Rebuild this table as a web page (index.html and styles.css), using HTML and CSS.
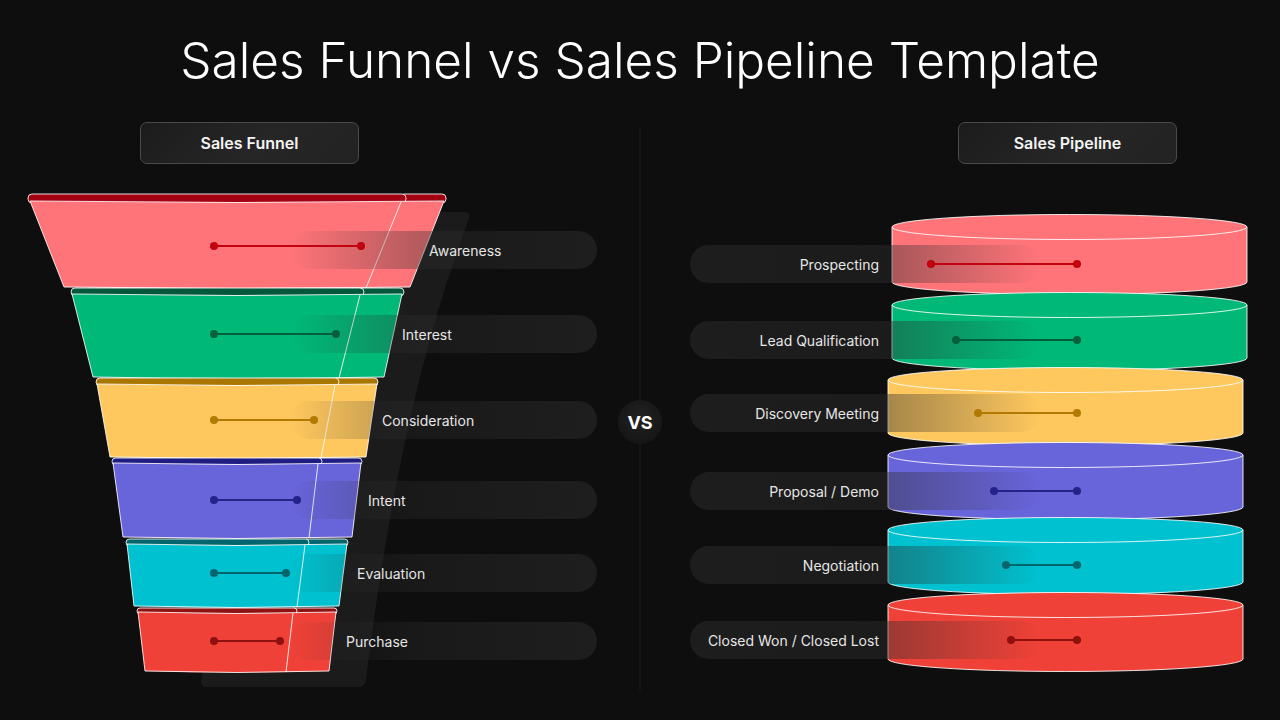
FILE: index.html
```html
<!DOCTYPE html>
<html lang="en">
<head>
<meta charset="utf-8">
<title>Sales Funnel vs Sales Pipeline Template</title>
<link rel="stylesheet" href="styles.css">
</head>
<body>
<main class="slide">
  <h1 class="title">Sales Funnel vs Sales Pipeline Template</h1>
  <div class="compare">
    <section class="panel funnel-panel">
      <div class="tag">Sales Funnel</div>
      <div class="diagram">
        <svg class="art" viewBox="0 164 640 536" width="640" height="536" aria-hidden="true">
          <path class="band" d="M380 212 L463 212 Q471 212 469 219 Q400 400 366 680 Q365 687 358 687 L207 687 Q200 687 201 680 Q250 420 380 212 Z"/>
          <!-- Awareness -->
          <g>
            <rect class="edge" x="400" y="194" width="46" height="9" rx="4" fill="#a30012"/>
            <rect class="edge" x="28" y="194" width="378" height="9" rx="4" fill="#a30012"/>
            <path class="edge" fill="#ff7479" d="M30 201 Q237 204 444 201 L410 287 Q237 290 64 287 Z"/>
            <path class="edge" fill="none" d="M401 202 L366 288"/>
          </g>
          <!-- Interest -->
          <g>
            <rect class="edge" x="358" y="288" width="46" height="8" rx="4" fill="#03573a"/>
            <rect class="edge" x="71" y="288" width="293" height="8" rx="4" fill="#03573a"/>
            <path class="edge" fill="#00b978" d="M72 294 Q237 297 402 294 L384 377 Q237 380 93 377 Z"/>
            <path class="edge" fill="none" d="M360 295 L339 378"/>
          </g>
          <!-- Consideration -->
          <g>
            <rect class="edge" x="333" y="378" width="45" height="8" rx="4" fill="#a97600"/>
            <rect class="edge" x="96" y="378" width="243" height="8" rx="4" fill="#a97600"/>
            <path class="edge" fill="#ffc85e" d="M97 384 Q237 387 377 384 L366 457 Q237 460 110 457 Z"/>
            <path class="edge" fill="none" d="M335 385 L321 458"/>
          </g>
          <!-- Intent -->
          <g>
            <rect class="edge" x="316" y="458" width="46" height="7" rx="3.5" fill="#1f1d82"/>
            <rect class="edge" x="112" y="458" width="210" height="7" rx="3.5" fill="#1f1d82"/>
            <path class="edge" fill="#6864da" d="M113 463 Q237 466 361 463 L352 537 Q237 540 123 537 Z"/>
            <path class="edge" fill="none" d="M318 464 L309 538"/>
          </g>
          <!-- Evaluation -->
          <g>
            <rect class="edge" x="303" y="539" width="45" height="7" rx="3.5" fill="#03666c"/>
            <rect class="edge" x="126" y="539" width="183" height="7" rx="3.5" fill="#03666c"/>
            <path class="edge" fill="#00c1cf" d="M127 544 Q237 547 347 544 L339 606 Q237 609 134 606 Z"/>
            <path class="edge" fill="none" d="M305 545 L297 607"/>
          </g>
          <!-- Purchase -->
          <g>
            <rect class="edge" x="291" y="608" width="46" height="6" rx="3" fill="#8f1111"/>
            <rect class="edge" x="137" y="608" width="160" height="6" rx="3" fill="#8f1111"/>
            <path class="edge" fill="#ef4137" d="M138 612 Q237 615 336 612 L329 671 Q237 674 145 671 Z"/>
            <path class="edge" fill="none" d="M293 613 L286 672"/>
          </g>
        </svg>
        <ol class="rows">
          <li class="row c-pink"><span class="link raised" style="left:214px;width:147px"></span><span class="pill">Awareness</span></li>
          <li class="row c-green"><span class="link" style="left:214px;width:122px"></span><span class="pill">Interest</span></li>
          <li class="row c-yellow"><span class="link" style="left:214px;width:100px"></span><span class="pill">Consideration</span></li>
          <li class="row c-purple"><span class="link" style="left:214px;width:83px"></span><span class="pill">Intent</span></li>
          <li class="row c-cyan"><span class="link" style="left:214px;width:72px"></span><span class="pill">Evaluation</span></li>
          <li class="row c-red"><span class="link" style="left:214px;width:66px"></span><span class="pill">Purchase</span></li>
        </ol>
      </div>
    </section>

    <div class="divider"><span class="vs">VS</span></div>

    <section class="panel pipeline-panel">
      <div class="tag">Sales Pipeline</div>
      <div class="diagram">
        <svg class="art" viewBox="640 164 640 536" width="640" height="536" aria-hidden="true">
          <g fill="#ff7479">
            <path class="edge" d="M892 227 L892 282 A177.5 12.5 0 0 0 1247 282 L1247 227 Z"/>
            <ellipse class="edge" cx="1069.5" cy="227" rx="177.5" ry="12.5"/>
          </g>
          <g fill="#00b978">
            <path class="edge" d="M892 305 L892 358 A177.5 12.5 0 0 0 1247 358 L1247 305 Z"/>
            <ellipse class="edge" cx="1069.5" cy="305" rx="177.5" ry="12.5"/>
          </g>
          <g fill="#ffc85e">
            <path class="edge" d="M888 380 L888 433 A177.5 12.5 0 0 0 1243 433 L1243 380 Z"/>
            <ellipse class="edge" cx="1065.5" cy="380" rx="177.5" ry="12.5"/>
          </g>
          <g fill="#6864da">
            <path class="edge" d="M888 455 L888 507 A177.5 12.5 0 0 0 1243 507 L1243 455 Z"/>
            <ellipse class="edge" cx="1065.5" cy="455" rx="177.5" ry="12.5"/>
          </g>
          <g fill="#00c1cf">
            <path class="edge" d="M888 530 L888 582 A177.5 12.5 0 0 0 1243 582 L1243 530 Z"/>
            <ellipse class="edge" cx="1065.5" cy="530" rx="177.5" ry="12.5"/>
          </g>
          <g fill="#ef4137">
            <path class="edge" d="M888 605 L888 659 A177.5 12.5 0 0 0 1243 659 L1243 605 Z"/>
            <ellipse class="edge" cx="1065.5" cy="605" rx="177.5" ry="12.5"/>
          </g>
        </svg>
        <ol class="rows">
          <li class="row c-pink"><span class="link" style="left:291px;width:146px"></span><span class="pill">Prospecting</span></li>
          <li class="row c-green"><span class="link" style="left:316px;width:121px"></span><span class="pill">Lead Qualification</span></li>
          <li class="row c-yellow"><span class="link" style="left:338px;width:99px"></span><span class="pill">Discovery Meeting</span></li>
          <li class="row c-purple"><span class="link" style="left:354px;width:83px"></span><span class="pill">Proposal / Demo</span></li>
          <li class="row c-cyan"><span class="link" style="left:366px;width:71px"></span><span class="pill">Negotiation</span></li>
          <li class="row c-red"><span class="link" style="left:371px;width:66px"></span><span class="pill">Closed Won / Closed Lost</span></li>
        </ol>
      </div>
    </section>
  </div>
</main>
</body>
</html>
```

FILE: styles.css
```css
html, body {
  margin: 0;
  padding: 0;
  background: #0e0e0e;
}

.slide {
  width: 1280px;
  height: 720px;
  overflow: hidden;
  background: #0e0e0e;
  color: #ffffff;
  font-family: Inter, "Noto Sans", "Liberation Sans", sans-serif;
}

.title {
  margin: 0;
  padding-top: 36px;
  height: 48px;
  line-height: 48px;
  font-size: 49.5px;
  font-weight: 300;
  text-align: center;
  letter-spacing: 0;
  color: #ffffff;
}

.compare {
  display: flex;
  margin-top: 38px;
  height: 598px;
}

.panel {
  width: 640px;
  display: flex;
  flex-direction: column;
}

.tag {
  box-sizing: border-box;
  width: 219px;
  height: 42px;
  border: 1px solid #4a4a4a;
  border-radius: 7px;
  background: linear-gradient(135deg, #1c1c1c 0%, #262626 55%, #222222 100%);
  display: flex;
  align-items: center;
  justify-content: center;
  font-size: 16px;
  font-weight: 600;
  color: #f4f4f4;
}

.funnel-panel .tag { margin-left: 140px; }
.pipeline-panel .tag { margin-left: 318px; }

.diagram {
  position: relative;
  height: 536px;
}

.art {
  position: absolute;
  left: 0;
  top: 0;
  display: block;
}

.band { fill: #1b1b1b; }

.edge {
  stroke: #ffffff;
  stroke-opacity: 0.85;
  stroke-width: 1;
}

.rows {
  position: relative;
  list-style: none;
  margin: 0;
  padding: 0;
  display: flex;
  flex-direction: column;
}

.funnel-panel .rows { padding-top: 67px; }
.pipeline-panel .rows { padding-top: 81px; }

.row {
  position: relative;
  height: 38px;
  display: flex;
}

/* vertical rhythm of the funnel rows */
.funnel-panel .row:nth-child(2) { margin-top: 46px; }
.funnel-panel .row:nth-child(3) { margin-top: 48px; }
.funnel-panel .row:nth-child(4) { margin-top: 42px; }
.funnel-panel .row:nth-child(5) { margin-top: 35px; }
.funnel-panel .row:nth-child(6) { margin-top: 30px; }

/* vertical rhythm of the pipeline rows */
.pipeline-panel .row:nth-child(2) { margin-top: 38px; }
.pipeline-panel .row:nth-child(3) { margin-top: 35px; }
.pipeline-panel .row:nth-child(4) { margin-top: 40px; }
.pipeline-panel .row:nth-child(5) { margin-top: 36px; }
.pipeline-panel .row:nth-child(6) { margin-top: 37px; }

.pill {
  box-sizing: border-box;
  height: 38px;
  border-radius: 19px;
  display: flex;
  align-items: center;
  font-size: 14px;
  color: #e6e6e6;
  white-space: nowrap;
}

.funnel-panel .pill {
  margin-left: 290px;
  width: 307px;
  background: linear-gradient(90deg, rgba(46, 46, 46, 0) 0, rgba(46, 46, 46, 0.36) 130px, rgba(46, 46, 46, 0.5) 100%);
}

.funnel-panel .row:nth-child(1) .pill { padding-left: 139px; }
.funnel-panel .row:nth-child(2) .pill { padding-left: 112px; }
.funnel-panel .row:nth-child(3) .pill { padding-left: 92px; }
.funnel-panel .row:nth-child(4) .pill { padding-left: 78px; }
.funnel-panel .row:nth-child(5) .pill { padding-left: 67px; }
.funnel-panel .row:nth-child(6) .pill { padding-left: 56px; }

.pipeline-panel .pill {
  margin-left: 50px;
  width: 350px;
  justify-content: flex-end;
  padding-right: 161px;
  background: linear-gradient(90deg, rgba(46, 46, 46, 0.48) 0, rgba(46, 46, 46, 0.42) 200px, rgba(46, 46, 46, 0) 100%);
}

.link {
  position: absolute;
  top: 18px;
  height: 2px;
  background: currentColor;
  z-index: 2;
}

.link.raised { top: 14px; }

.link::before,
.link::after {
  content: "";
  position: absolute;
  top: -3px;
  width: 8px;
  height: 8px;
  border-radius: 50%;
  background: currentColor;
}

.link::before { left: -4px; }
.link::after { right: -4px; }

.c-pink { color: #c3000f; }
.c-green { color: #04603c; }
.c-yellow { color: #b27a00; }
.c-purple { color: #232389; }
.c-cyan { color: #02656b; }
.c-red { color: #900f0f; }

.divider {
  position: relative;
  width: 0;
}

.divider::before {
  content: "";
  position: absolute;
  left: -1px;
  top: 6px;
  bottom: 30px;
  width: 2px;
  background: #161616;
}

.vs {
  position: absolute;
  left: -22px;
  top: 278px;
  width: 44px;
  height: 44px;
  border-radius: 50%;
  background: radial-gradient(circle at 50% 40%, #222222 0%, #181818 60%, #121212 100%);
  display: flex;
  align-items: center;
  justify-content: center;
  font-size: 18px;
  font-weight: 700;
  color: #ffffff;
  z-index: 2;
}
```
